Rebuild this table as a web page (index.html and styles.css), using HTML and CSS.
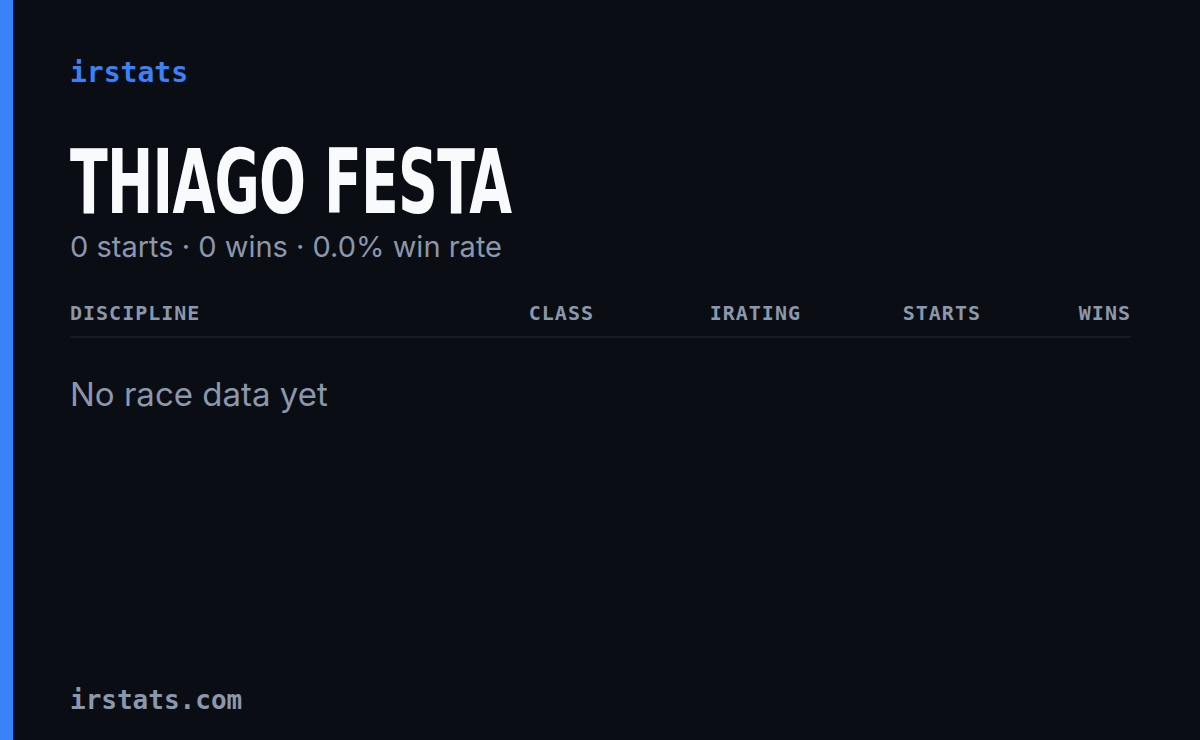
FILE: index.html
```html
<!DOCTYPE html>
<html>
<head>
<meta charset="utf-8">
<link rel="stylesheet" href="styles.css">
</head>
<body>
<div class="card">
  <div class="accent"></div>
  <main class="main">
    <div class="logo">irstats</div>
    <h1 class="name"><span class="name-text">THIAGO FESTA</span></h1>
    <div class="summary">0 starts · 0 wins · 0.0% win rate</div>
    <div class="table-head">
      <span class="col col-left">DISCIPLINE</span>
      <span class="col">CLASS</span>
      <span class="col">IRATING</span>
      <span class="col">STARTS</span>
      <span class="col">WINS</span>
    </div>
    <div class="empty">No race data yet</div>
    <div class="footer">irstats.com</div>
  </main>
</div>
</body>
</html>
```
FILE: styles.css
```css
html, body {
  margin: 0;
  padding: 0;
  background: #0a0d14;
}
.card {
  display: flex;
  width: 1200px;
  height: 740px;
  background: #0a0d14;
}
.accent {
  width: 13px;
  background: #3b82f6;
  flex: none;
}
.main {
  flex: 1;
  display: flex;
  flex-direction: column;
  padding: 55px 69px 24px 57px;
}
.logo {
  font-family: "DejaVu Sans Mono", monospace;
  font-size: 28px;
  font-weight: 700;
  color: #3b82f6;
  line-height: 36px;
}
.name {
  margin: 52px 0 0 0;
  font-family: "DejaVu Sans", sans-serif;
  font-stretch: condensed;
  font-weight: 700;
  font-size: 89px;
  line-height: 78px;
  color: #f8fafc;
  letter-spacing: -1px;
}
.name-text {
  display: inline-block;
  transform: scaleX(0.69);
  transform-origin: left center;
}
.summary {
  margin-top: 12px;
  font-family: "Inter", sans-serif;
  font-size: 29px;
  line-height: 28px;
  color: #8b97ab;
}
.table-head {
  margin-top: 40px;
  display: grid;
  grid-template-columns: 1fr 150px 207px 180px 150px;
  padding-bottom: 11px;
  border-bottom: 2px solid #161a24;
  font-family: "DejaVu Sans Mono", monospace;
  font-weight: 700;
  font-size: 20px;
  letter-spacing: 1px;
  color: #8b97ab;
  line-height: 24px;
}
.col {
  text-align: right;
}
.col-left {
  text-align: left;
}
.empty {
  margin-top: 36px;
  font-family: "Inter", sans-serif;
  font-size: 33px;
  color: #8b97ab;
  line-height: 40px;
}
.footer {
  margin-top: auto;
  font-family: "DejaVu Sans Mono", monospace;
  font-weight: 700;
  font-size: 26px;
  color: #8b97ab;
  line-height: 32px;
}
```
